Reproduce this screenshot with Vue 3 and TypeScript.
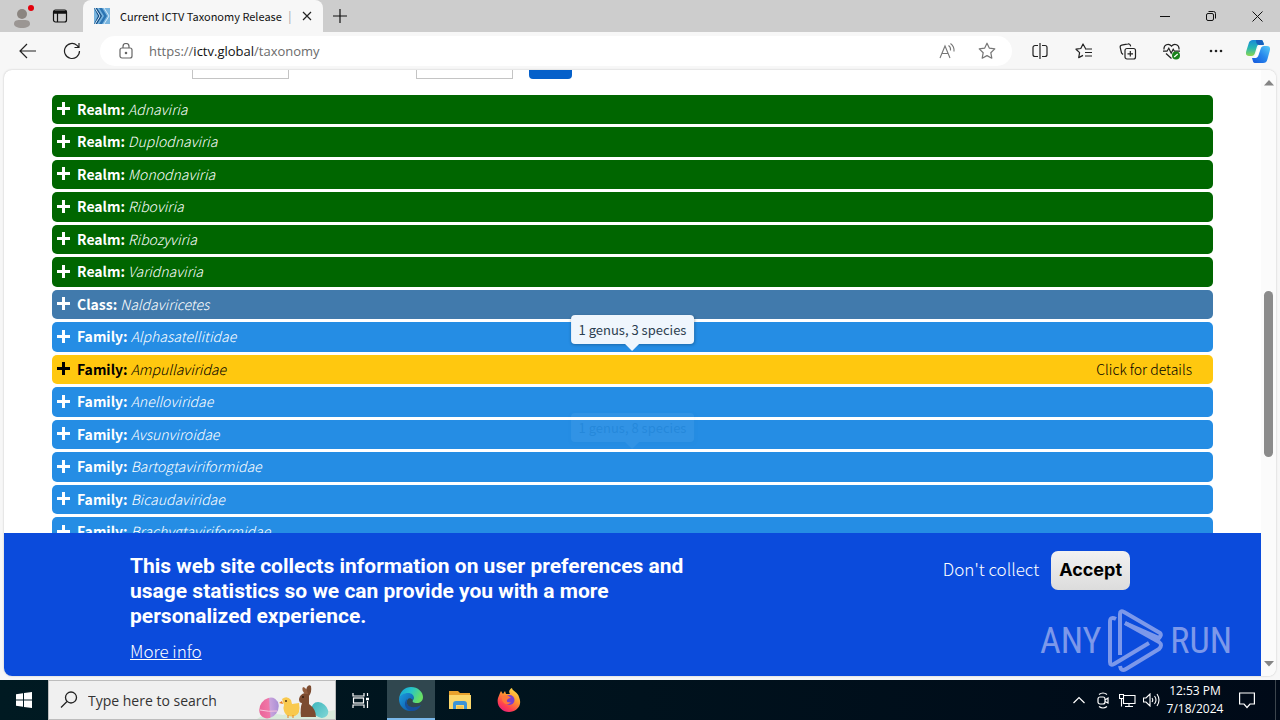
<script setup lang="ts">
import { ref } from 'vue'

interface Taxon {
  rank: 'Realm' | 'Class' | 'Family'
  name: string
}

const taxa: Taxon[] = [
  { rank: 'Realm', name: 'Adnaviria' },
  { rank: 'Realm', name: 'Duplodnaviria' },
  { rank: 'Realm', name: 'Monodnaviria' },
  { rank: 'Realm', name: 'Riboviria' },
  { rank: 'Realm', name: 'Ribozyviria' },
  { rank: 'Realm', name: 'Varidnaviria' },
  { rank: 'Class', name: 'Naldaviricetes' },
  { rank: 'Family', name: 'Alphasatellitidae' },
  { rank: 'Family', name: 'Ampullaviridae' },
  { rank: 'Family', name: 'Anelloviridae' },
  { rank: 'Family', name: 'Avsunviroidae' },
  { rank: 'Family', name: 'Bartogtaviriformidae' },
  { rank: 'Family', name: 'Bicaudaviridae' },
  { rank: 'Family', name: 'Brachygtaviriformidae' },
]

const active = ref('Ampullaviridae')
const fading = ref('Bartogtaviriformidae')
const find = ref('')
const release = ref('')
const query = ref('')
</script>

<template>
  <div class="desktop">
    <header class="titlebar">
      <button class="profile" aria-label="Profile">
        <svg width="26" height="28" viewBox="0 0 26 28">
          <circle cx="13" cy="12" r="5" fill="#8b8580" />
          <path d="M5 22c0-4 3-4 8-4s8 0 8 4c0 2-3 4-8 4s-8-2-8-4z" fill="#9b9693" />
          <circle cx="22" cy="6" r="3" fill="#e3000b" />
        </svg>
      </button>
      <button class="tabs-menu" aria-label="Tab actions">
        <svg width="16" height="16" viewBox="0 0 16 16" fill="none" stroke="#111">
          <rect x="1.5" y="2" width="13" height="12" rx="2" stroke-width="1.2" />
          <path d="M2 3.5h12M2 5h12" stroke-width="1.6" />
          <path d="M5.5 5v9" stroke-width="1.2" />
        </svg>
      </button>
      <div class="tab">
        <svg width="16" height="16" viewBox="0 0 16 16">
          <rect width="16" height="16" fill="#78b4de" />
          <path d="M0 0h3l5 8-5 8H0l4-8z" fill="#154f86" />
          <path d="M5 0h3l5 8-5 8H5l5-8z" fill="#2c75b4" />
          <path d="M1 0l5 8-5 8M10 0l5 8-5 8" fill="none" stroke="#d5eafa" />
        </svg>
        <span class="tab-title">Current ICTV Taxonomy Release</span>
        <span class="tab-rest">|</span>
        <button aria-label="Close tab">
          <svg width="10" height="10" viewBox="0 0 10 10" stroke="#222" stroke-width="1.2"><path d="M1 1l8 8M9 1l-8 8" /></svg>
        </button>
      </div>
      <button class="new-tab" aria-label="New tab">
        <svg width="14" height="14" viewBox="0 0 14 14" stroke="#111" stroke-width="1.2"><path d="M7 0v14M0 7h14" /></svg>
      </button>
      <div class="window-buttons">
        <button aria-label="Minimize"><svg width="10" height="10" viewBox="0 0 10 10" stroke="#111"><path d="M0 5.5h10" /></svg></button>
        <button aria-label="Restore">
          <svg width="10" height="10" viewBox="0 0 10 10" stroke="#111" fill="none"><rect x=".5" y="2.5" width="7" height="7" rx="1.5" /><path d="M2.5 .5h5a2 2 0 0 1 2 2v5" /></svg>
        </button>
        <button aria-label="Close"><svg width="11" height="11" viewBox="0 0 11 11" stroke="#111"><path d="M.5 .5l10 10M10.5 .5l-10 10" /></svg></button>
      </div>
    </header>

    <nav class="toolbar">
      <button aria-label="Back">
        <svg width="18" height="16" viewBox="0 0 18 16" fill="none" stroke="#222" stroke-width="1.2"><path d="M17 8H1M8 1L1 8l7 7" /></svg>
      </button>
      <button aria-label="Refresh">
        <svg width="18" height="18" viewBox="0 0 18 18" fill="none" stroke="#222" stroke-width="1.2"><path d="M16.5 9A7.5 7.5 0 1 1 14 3.4L15.500 5M16 1v4.500h-4.500" /></svg>
      </button>
      <div class="address">
        <svg width="14" height="16" viewBox="0 0 14 16" fill="none" stroke="#666" stroke-width="1.2">
          <rect x="1" y="5" width="12" height="10" rx="2" /><path d="M4 5V3.500a3 3 0 0 1 6 0V5" /><circle cx="7" cy="10" r=".7" fill="#666" />
        </svg>
        <a class="url" href="#">https://<b>ictv.global</b>/taxonomy</a>
        <button aria-label="Read aloud">
          <svg width="18" height="16" viewBox="0 0 18 16" fill="none" stroke="#767676" stroke-width="1.1"><path d="M2 15L7 3l5 12M4 10.500h6M10.500 2.500q2.500 1.500 2 5M12.500 .5q4 3 3.500 8" /></svg>
        </button>
        <button aria-label="Favorite">
          <svg width="18" height="18" viewBox="0 0 18 18" fill="none" stroke="#767676" stroke-width="1.2" stroke-linejoin="round"><path d="M9 1.200l2.400 5 5.400.7-4 3.800 1 5.500L9 13.600l-4.800 2.600 1-5.500-4-3.800 5.400-.7z" /></svg>
        </button>
      </div>
      <button aria-label="Split screen">
        <svg width="16" height="16" viewBox="0 0 16 16" fill="none" stroke="#222" stroke-width="1.200"><path d="M6 2.500H3a2 2 0 0 0-2 2v7a2 2 0 0 0 2 2h3M10 2.500h3a2 2 0 0 1 2 2v7a2 2 0 0 1-2 2h-3M8 0v16" /></svg>
      </button>
      <button aria-label="Favorites">
        <svg width="18" height="16" viewBox="0 0 18 16" fill="none" stroke="#222" stroke-width="1.200" stroke-linejoin="round"><path d="M10.500 5.500L8 1 5.800 5.500 1 6.200l3.600 3.400-.9 5L8 12.400M10 6h7M10 9.500h7M10 13h7" /></svg>
      </button>
      <button aria-label="Collections">
        <svg width="18" height="17" viewBox="0 0 18 17" fill="none" stroke="#222" stroke-width="1.200"><rect x="6" y="5.500" width="10.500" height="10.500" rx="2" /><path d="M11.300 8v5.500M8.500 10.800H14M4 11.500L2.500 10 1.200 4.500a2 2 0 0 1 1.500-2.300L9 .9a2 2 0 0 1 2.400 1.500l.2 1" /></svg>
      </button>
      <button aria-label="Browser essentials">
        <svg width="18" height="17" viewBox="0 0 18 17" fill="none" stroke="#222" stroke-width="1.200"><path d="M1 6.500C.5 2 5.500-.5 8.500 3.200 11.500-.5 16.500 2 16 6.500M0 8.200h4l1.800-3 2.400 5 2-4 1.200 2H17M3 10.500l5.500 5" /><circle cx="13" cy="12.500" r="4" fill="#18831c" stroke="none" /><path d="M11.200 14l3.500-3" stroke="#fff" /></svg>
      </button>
      <button aria-label="Settings and more">
        <svg width="16" height="4" viewBox="0 0 16 4" fill="#222"><circle cx="3" cy="2" r="1.300" /><circle cx="8" cy="2" r="1.300" /><circle cx="13" cy="2" r="1.300" /></svg>
      </button>
      <button class="copilot" aria-label="Copilot">
        <svg width="24" height="23" viewBox="0 0 24 23">
          <defs>
            <linearGradient id="cpA" x1="0" y1="0" x2="0" y2="1"><stop offset="0" stop-color="#1789d8" /><stop offset=".5" stop-color="#27b7b2" /><stop offset="1" stop-color="#8bd650" /></linearGradient>
            <linearGradient id="cpB" x1="1" y1="0" x2="0" y2="1"><stop offset="0" stop-color="#58cdf8" /><stop offset=".5" stop-color="#2686ec" /><stop offset="1" stop-color="#1657dc" /></linearGradient>
          </defs>
          <path d="M7 0h8c2 0 2 2 3 4h-4c-2 0-3 2-3.500 4l-1.500 5c-.6 2-1.500 3-3.500 3H3c-3 0-3.500-2-2.700-5L2.500 4C3.300 1 4.500 0 7 0z" fill="url(#cpA)" />
          <path d="M17 23H9c-2 0-2-2-3-5h3c2 0 3-1 3.600-3l2-6c.6-2 1.500-3 3.500-3H21c3 0 3.500 2 2.700 5l-2.200 8c-.8 3-2 4-4.500 4z" fill="url(#cpB)" />
          <path d="M14 6h2.500c-1.500.5-2 1.500-2.500 3l-2 6c-.5 1.500-1.300 2.500-3 3H7.500c1.500-.5 2-2 2.500-3.500L11.500 9c.5-1.500 1-2.500 2.500-3z" fill="#fff" />
          <path d="M7 0h8c2 0 2 2 3 5h-4c-3 0-4-2-4-5z" fill="#1760bd" />
        </svg>
      </button>
    </nav>

    <main class="page">
      <div class="content">
        <form class="search" @submit.prevent>
          <input v-model="find" class="first" aria-label="Find taxon" />
          <input v-model="release" class="second" aria-label="Release" />
          <button aria-label="Search"></button>
        </form>
        <ul class="taxonomy">
          <li
            v-for="t in taxa"
            :key="t.name"
            :class="[t.rank.toLowerCase(), { active: t.name === active }]"
          >
            <button class="taxon" @click="active = t.name">
              <svg width="13" height="13" viewBox="0 0 13 13" fill="none" stroke="currentColor" stroke-width="3"><path d="M6.500 0v13M0 6.500h13" /></svg>
              <strong>{{ t.rank }}:</strong>
              <em>{{ t.name }}</em>
              <span v-if="t.name === active" class="details">Click for details</span>
            </button>
            <div v-if="t.name === active" class="tip" role="tooltip">1 genus, 3 species</div>
            <div v-if="t.name === fading" class="tip fading" role="tooltip">1 genus, 8 species</div>
          </li>
        </ul>
      </div>
      <div class="scrollbar">
        <svg width="10" height="6" viewBox="0 0 10 6" fill="#858585"><path d="M5 0l5 5.500H0z" /></svg>
        <div class="track"><div class="thumb"></div></div>
        <svg width="10" height="6" viewBox="0 0 10 6" fill="#858585"><path d="M0 0h10L5 5.500z" /></svg>
      </div>

      <section class="consent" aria-label="Cookie notice">
        <div class="message">
          <h2>This web site collects information on user preferences and usage statistics so we can provide you with a more personalized experience.</h2>
          <a href="#">More info</a>
        </div>
        <div class="choices">
          <button class="decline">Don't collect</button>
          <button class="accept">Accept</button>
        </div>
      </section>

      <div class="watermark">
        <span>ANY</span>
        <svg width="55" height="64" viewBox="0 0 55 64" fill="none" stroke="currentColor" stroke-width="4" stroke-linejoin="round">
          <path d="M8 10q-6-3-6 3v40q0 4 4 2L41 34" />
          <path d="M12 46V5q0-4 4-2l36 21q2 2-1 5L17 14" />
          <path d="M12 57q1 6 6 3l33-20q4-4 0-7L17 14" />
        </svg>
        <span>RUN</span>
      </div>
    </main>

    <footer class="taskbar">
      <button class="start" aria-label="Start">
        <svg width="16" height="16" viewBox="0 0 16 16" fill="#fff"><path d="M0 2.200l7-1v6.300H0zM8 1l8-1v7.500H8zM0 8.500h7v6.300l-7-1zM8 8.500h8V16l-8-1z" /></svg>
      </button>
      <label class="find">
        <svg width="18" height="18" viewBox="0 0 18 18" fill="none" stroke="#222" stroke-width="1.300"><circle cx="11" cy="6.500" r="5.500" /><path d="M7 10.500L1 16.500" /></svg>
        <input v-model="query" placeholder="Type here to search" aria-label="Type here to search" />
        <svg width="78" height="38" viewBox="0 0 78 38">
          <defs>
            <linearGradient id="eggP" x1="1" y1="0" x2="0" y2="1"><stop offset="0" stop-color="#9a86d2" /><stop offset=".45" stop-color="#c9a3dc" /><stop offset=".5" stop-color="#f077a8" /><stop offset="1" stop-color="#e85c91" /></linearGradient>
            <linearGradient id="eggB" x1="0" y1="0" x2="0" y2="1"><stop offset="0" stop-color="#45b9bf" /><stop offset="1" stop-color="#79d4d4" /></linearGradient>
          </defs>
          <path d="M0 38q10-7 26-4 18-6 33-2l19-3v9z" fill="#d9eadb" />
          <ellipse cx="12" cy="27" rx="9" ry="11" fill="url(#eggP)" transform="rotate(35 12 27)" />
          <path d="M3 29q9 2 17 1" stroke="#f7c3dc" stroke-width="1" fill="none" />
          <path d="M25 18q5-4 9 1l1 4 7-1q2 11-4 13-9 2-11-5-1-4 0-6z" fill="#f9c94e" />
          <path d="M25 20l-3 2 4 1z" fill="#ee7b1c" /><circle cx="29" cy="20" r="1" fill="#50351a" />
          <path d="M31 34v3M36 34v3" stroke="#e8821f" />
          <ellipse cx="63" cy="29" rx="7" ry="9" fill="url(#eggB)" transform="rotate(-50 63 29)" />
          <path d="M42 18q1-5 6-6l2-6q2-3 4-1 1 6-2 10v8q7 5 7 13H44q-1-9 1-14-3 0-3-4z" fill="#7c4b30" />
          <path d="M48 13q-4-4-2-7 4 1 5 7z" fill="#915d3f" /><circle cx="46" cy="16" r="1" fill="#2e180d" />
        </svg>
      </label>
      <button class="app task-view" aria-label="Task View">
        <svg width="17" height="17" viewBox="0 0 17 17" fill="none" stroke="#fff" stroke-width="1.200"><path d="M1 1v3h11V1M1 16v-3h11v3M15.500 1v3M15.500 9v7" /><rect x="1.500" y="6" width="10" height="5" /><path d="M14 7h3" stroke-width="2.500" /></svg>
      </button>
      <button class="app current" aria-label="Microsoft Edge">
        <svg width="24" height="24" viewBox="0 0 24 24">
          <defs>
            <linearGradient id="edA" x1="0" y1="0" x2="1" y2=".4"><stop offset="0" stop-color="#159edb" /><stop offset=".5" stop-color="#26c4c9" /><stop offset="1" stop-color="#67df65" /></linearGradient>
            <linearGradient id="edB" x1="0" y1="0" x2="1" y2="1"><stop offset="0" stop-color="#1c9de0" /><stop offset="1" stop-color="#0c4fa2" /></linearGradient>
          </defs>
          <path d="M0 12C1 4 6 0 12 0c7 0 12 5 12 10 0 4-3 6-6 6-4 0-5-1-4-3 2-3-1-6-4-6-5 0-9 2-10 5z" fill="url(#edA)" />
          <path d="M0 12c1-4 5-6 9-6 5 0 7 4 5 7-4-4-7 0-6 4 1 3 4 6 7 6.500C7 26 0 20 0 12z" fill="url(#edB)" />
          <path d="M8 12c-2 7 5 11 14 6-2 4-5 6-9 6-7-1-9-8-5-12z" fill="#174f9c" />
        </svg>
      </button>
      <button class="app" aria-label="File Explorer">
        <svg width="22" height="19" viewBox="0 0 22 19"><path d="M0 0h9l2 2h10v5H0z" fill="#e8a22d" /><path d="M0 4h22v14H0z" fill="#fbd76b" /><path d="M4 18v-5q0-3 3-3h8q3 0 3 3v5h-3v-4H7v4z" fill="#3d94d6" /><path d="M8 15h6v3H8z" fill="#f5c34f" /></svg>
      </button>
      <button class="app" aria-label="Firefox">
        <svg width="24" height="24" viewBox="0 0 24 24">
          <defs><linearGradient id="fx" x1=".8" y1="0" x2=".2" y2="1"><stop offset="0" stop-color="#ffe14a" /><stop offset=".4" stop-color="#ff962f" /><stop offset=".75" stop-color="#ff3f50" /><stop offset="1" stop-color="#e51c80" /></linearGradient></defs>
          <path d="M3 5l1-2 2 3 2-3 1 3h4c-2-3 0-5 2-6 0 3 6 4 7 9 4 9-3 15-10 15S-1 18 1 10z" fill="url(#fx)" />
          <circle cx="12.500" cy="12" r="5" fill="#7840cf" />
          <path d="M5 8q6-2 9 2-3 0-4 2-1 3 4 2-3 4-7 1-3-3-2-7z" fill="#ff7839" />
        </svg>
      </button>
      <div class="tray">
        <button aria-label="Show hidden icons"><svg width="12" height="8" viewBox="0 0 12 8" fill="none" stroke="#fff" stroke-width="1.200"><path d="M.5 7L6 1.500 11.500 7" /></svg></button>
        <button aria-label="Meet now"><svg width="12" height="17" viewBox="0 0 12 17" fill="none" stroke="#fff" stroke-width="1.200"><rect x="1" y="5" width="7" height="7" rx="2" /><path d="M8 8l3-2v5L8 9.500M2 2.500q4-3 8 0M2 14.500q4 3 8 0" /></svg></button>
        <button aria-label="Network"><svg width="17" height="15" viewBox="0 0 17 15" fill="none" stroke="#fff" stroke-width="1.100"><path d="M5 2.500h11v8H4.500V6M10 10.500v3M6 13.500h8" /><path d="M.5 1.500h4v4h-4zM2.500 5.500v8" /></svg></button>
        <button aria-label="Volume"><svg width="17" height="14" viewBox="0 0 17 14" fill="none" stroke="#fff" stroke-width="1.100"><path d="M.5 5H3l4-4v12L3 9H.5zM9 5q1.500 2 0 4M11.500 3q3 4 0 8M14 1q4 6 0 12" /></svg></button>
        <button class="clock"><time datetime="2024-07-18T12:53">12:53 PM<br />7/18/2024</time></button>
        <button class="notify" aria-label="Notifications"><svg width="16" height="17" viewBox="0 0 16 17" fill="none" stroke="#fff" stroke-width="1.200"><path d="M.6 1h14.800v11H11l-3 3.500L5 12H.6z" /></svg></button>
        <span class="peek"></span>
      </div>
    </footer>
  </div>
</template>

<style>
html,
body {
  margin: 0;
  overflow: hidden;
}
</style>

<style scoped>
.desktop {
  display: flex;
  flex-direction: column;
  height: 100vh;
  background: #f7f7f7;
  color: #111;
  font-family: 'Open Sans', 'Noto Sans', sans-serif;
  font-size: 12px;
}
* {
  box-sizing: border-box;
}
button {
  display: flex;
  align-items: center;
  justify-content: center;
  margin: 0;
  padding: 0;
  border: 0;
  background: none;
  color: inherit;
  font: inherit;
}
svg {
  display: block;
  flex: none;
}
.titlebar {
  display: flex;
  align-items: stretch;
  flex: none;
  height: 32px;
  background: #cdcdcd;
}
.profile {
  width: 44px;
}
.tabs-menu {
  width: 32px;
}
.tab {
  display: flex;
  align-items: center;
  width: 240px;
  margin-left: 7px;
  padding: 0 10px 0 11px;
  border-radius: 8px 8px 0 0;
  background: #f7f7f7;
}
.tab-title {
  flex: 1;
  margin-left: 10px;
  font-family: 'Noto Sans CJK SC', sans-serif;
  font-size: 11px;
  line-height: 16px;
  white-space: nowrap;
}
.tab-rest {
  margin-right: 8px;
  color: #aaa;
}
.tab button {
  width: 12px;
  height: 24px;
}
.new-tab {
  width: 34px;
}
.window-buttons {
  display: flex;
  margin-left: auto;
}
.window-buttons button {
  width: 46px;
}
.toolbar {
  display: flex;
  align-items: center;
  flex: none;
  height: 38px;
  padding-left: 6px;
}
.toolbar > button {
  width: 44px;
  height: 36px;
}
.toolbar > .copilot {
  width: 42px;
  padding-right: 2px;
}
.address {
  display: flex;
  align-items: center;
  flex: 1;
  height: 30px;
  margin: 0 6px;
  padding: 0 5px 0 19px;
  border-radius: 15px;
  background: #fff;
}
.address button {
  width: 40px;
  height: 28px;
}
.url {
  flex: 1;
  margin-left: 16px;
  color: #6b6b6b;
  font-size: 13px;
  text-decoration: none;
}
.url b {
  color: #111;
  font-weight: 400;
}
.page {
  position: relative;
  display: flex;
  flex: 1;
  min-height: 0;
  margin: 0 4px 4px;
  overflow: hidden;
  border-radius: 8px;
  background: #fff;
  box-shadow: 0 0 2px #bbb;
}
.content {
  flex: 1;
  min-width: 0;
  padding: 0 48px;
  font-family: 'Noto Sans CJK SC', sans-serif;
}
.search {
  display: flex;
  height: 31px;
  margin-top: -22px;
  padding-left: 140px;
}
.search input {
  width: 97px;
  border: 1px solid #c4c4c4;
  background: #fff;
}
.search .second {
  margin-left: 127px;
}
.search button {
  width: 43px;
  margin-left: 16px;
  border-radius: 4px;
  background: #0560ca;
}
.taxonomy {
  display: flex;
  flex-direction: column;
  gap: 3px;
  margin: 16px 0 0;
  padding: 0;
  list-style: none;
}
.taxonomy li {
  position: relative;
  height: 29px;
  border-radius: 5px;
  color: #fff;
}
.taxonomy li:nth-child(even) {
  height: 30px;
}
.realm {
  background: #006600;
}
.class {
  background: #417aac;
}
.family {
  background: #258de4;
}
.taxonomy .active {
  background: #ffc80f;
  color: #000;
}
.taxon {
  justify-content: flex-start;
  width: 100%;
  height: 100%;
  padding: 0 21px 2px 5px;
  font-size: 14px;
}
.taxon strong {
  margin: 0 3px 0 7px;
}
.taxon em,
.details {
  font-weight: 300;
}
.details {
  margin-left: auto;
}
.tip {
  position: absolute;
  bottom: 40px;
  left: 50%;
  z-index: 1;
  padding: 0 8px;
  transform: translateX(-50%);
  border-radius: 4px;
  background: #eff6fd;
  color: #2c3e50;
  font-size: 13px;
  line-height: 29px;
  white-space: nowrap;
  box-shadow: 0 1px 3px rgba(0, 0, 0, 0.25);
}
.tip::after {
  position: absolute;
  top: 100%;
  left: 50%;
  margin-left: -7px;
  border: 7px solid transparent;
  border-top-color: #eff6fd;
  border-bottom: 0;
  content: '';
}
.fading {
  opacity: 0.06;
}
.scrollbar {
  display: flex;
  flex-direction: column;
  align-items: center;
  width: 15px;
  padding: 10px 0 9px;
  background: #fbfbfb;
}
.track {
  display: flex;
  flex-direction: column;
  flex: 1;
  width: 9px;
}
.track::before {
  flex: 205;
  content: '';
}
.track::after {
  flex: 204;
  content: '';
}
.thumb {
  flex: 166;
  border-radius: 5px;
  background: #8b8b8b;
}
.consent {
  position: absolute;
  right: 15px;
  bottom: 0;
  left: 0;
  z-index: 2;
  display: flex;
  align-items: flex-start;
  justify-content: space-between;
  padding: 18px 131px 12px 126px;
  background: #0b4bdc;
  color: #fff;
  font-family: 'Noto Sans CJK SC', sans-serif;
  font-size: 17px;
}
.message {
  width: 580px;
}
.message h2 {
  margin: 3px 0 9px;
  font-family: Roboto, sans-serif;
  font-size: 21px;
  font-weight: 700;
  line-height: 25px;
}
.message a {
  display: block;
  width: fit-content;
  color: #fff;
  font-weight: 300;
  line-height: 26px;
}
.choices {
  display: flex;
  gap: 12px;
}
.decline {
  padding-bottom: 4px;
  font-weight: 300;
}
.accept {
  height: 39px;
  padding: 0 8px 2px;
  border-radius: 7px;
  background: linear-gradient(#f2f2f2, #dcdcdc);
  color: #000;
  font-family: Inter, sans-serif;
  font-size: 18px;
  font-weight: 700;
}
.watermark {
  position: absolute;
  right: 44px;
  bottom: 3px;
  z-index: 3;
  display: flex;
  align-items: center;
  gap: 7px;
  color: #7c98ea;
  font-family: 'Roboto Condensed', Roboto, sans-serif;
  font-size: 36px;
  line-height: 44px;
}
.taskbar {
  display: flex;
  flex: none;
  height: 40px;
  background: linear-gradient(90deg, #001a22, #000a18);
  color: #fff;
}
.start {
  width: 48px;
}
.find {
  display: flex;
  align-items: center;
  width: 288px;
  padding-left: 11px;
  overflow: hidden;
  border: 1px solid #bdbdbd;
  background: #f0f0f0;
}
.find input {
  flex: 1;
  min-width: 0;
  margin-left: 10px;
  padding: 0;
  border: 0;
  outline: 0;
  background: none;
  color: #333;
  font: inherit;
  font-size: 14px;
}
.find input::placeholder {
  color: #333;
}
.app {
  width: 48px;
  margin-right: 1px;
}
.task-view {
  margin-right: 3px;
}
.current {
  border-bottom: 2px solid #7ab8ea;
  background: #30474f;
}
.tray {
  display: flex;
  margin-left: auto;
}
.tray button {
  width: 24px;
}
.tray .clock {
  width: 64px;
  text-align: center;
  line-height: 18px;
}
.tray .notify {
  width: 40px;
}
.peek {
  width: 5px;
  margin-left: 8px;
  border-left: 1px solid #3c454d;
}
</style>
